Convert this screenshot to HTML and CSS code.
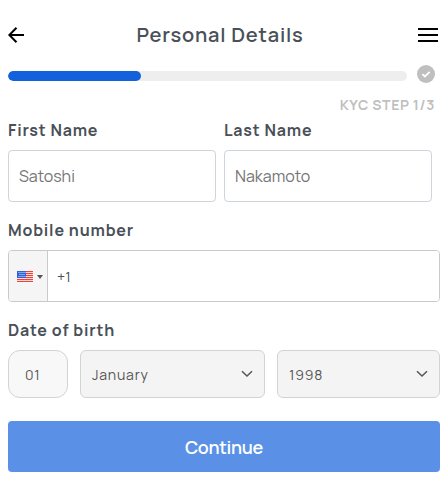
FILE: index.html
```html
<!DOCTYPE html>
<html lang="en">

<head>
  <meta charset="UTF-8">
  <meta name="viewport" content="width=device-width, initial-scale=1.0">
  <title>Personal Details</title>
  <link rel="stylesheet" href="styles.css">
</head>

<body>
  <div class="container">
    <div class="header">
      <button type="button" class="icon-btn" aria-label="Back">
        <svg width="16" height="16" viewBox="0 0 16 16" fill="none" stroke="#000" stroke-width="2">
          <path d="M16 8H1.5M8.5 0.7L1.3 8l7.2 7.3" />
        </svg>
      </button>
      <h1 class="title">Personal Details</h1>
      <button type="button" class="icon-btn" aria-label="Menu">
        <svg width="20" height="14" viewBox="0 0 20 14" fill="#000">
          <path d="M0 0h20v2H0zM0 6h20v2H0zM0 12h20v2H0z" />
        </svg>
      </button>
    </div>

    <div class="progress-row">
      <div class="progress">
        <div class="progress-bar"></div>
      </div>
      <svg class="check" width="18" height="18" viewBox="0 0 18 18">
        <circle cx="9" cy="9" r="9" fill="#bfbfbf" />
        <path d="M5.4 9.1l2.5 2.4 4.8-4.7" fill="none" stroke="#fff" stroke-width="1.8" />
      </svg>
    </div>
    <div class="step">KYC STEP 1/3</div>

    <form>
      <div class="name-row">
        <div class="field">
          <label class="label" for="firstName">First Name</label>
          <input type="text" id="firstName" class="input" placeholder="Satoshi">
        </div>
        <div class="field">
          <label class="label" for="lastName">Last Name</label>
          <input type="text" id="lastName" class="input" placeholder="Nakamoto">
        </div>
      </div>

      <label class="label" for="phone">Mobile number</label>
      <div class="phone">
        <button type="button" class="flag-btn" aria-label="Country">
          <svg width="16" height="11" viewBox="0 0 16 11">
            <rect width="16" height="11" fill="#f9dcd8" />
            <path d="M0 .5h16M0 2.5h16M0 4.5h16M0 6.5h16M0 8.5h16M0 10.5h16" stroke="#e8453c" />
            <rect x="0" y="0" width="9" height="7" fill="#2f62d9" />
            <path d="M1.5 1.5h7M2.5 3.5h6M1.5 5.5h7" stroke="#dce8ff" stroke-dasharray="1 1" />
          </svg>
          <span class="caret"></span>
        </button>
        <input type="tel" id="phone" class="phone-input" value="+1">
      </div>

      <label class="label" for="day">Date of birth</label>
      <div class="birth-row">
        <input type="text" id="day" class="day" value="01">
        <div class="select month">
          <span>January</span>
          <svg width="12" height="8" viewBox="0 0 12 8" fill="none" stroke="#555" stroke-width="1.5">
            <path d="M1 1.2l5 4.8 5-4.8" />
          </svg>
        </div>
        <div class="select year">
          <span>1998</span>
          <svg width="12" height="8" viewBox="0 0 12 8" fill="none" stroke="#555" stroke-width="1.5">
            <path d="M1 1.2l5 4.8 5-4.8" />
          </svg>
        </div>
      </div>

      <button type="submit" class="submit-btn">Continue</button>
    </form>
  </div>
</body>

</html>
```
FILE: styles.css
```css
* {
  box-sizing: border-box;
}

body {
  margin: 0;
  background-color: #fff;
  color: #495057;
  font-family: Manrope, Inter, sans-serif;
}

input,
button {
  font-family: inherit;
  margin: 0;
}

.container {
  padding: 20px 8px 0;
}

.header {
  display: flex;
  align-items: center;
  height: 30px;
  padding-right: 2px;
}

.icon-btn {
  display: flex;
  padding: 0;
  border: none;
  background: none;
  cursor: pointer;
}

.title {
  flex: 1;
  margin: 0;
  padding-right: 2px;
  font-size: 20px;
  font-weight: 600;
  line-height: 30px;
  letter-spacing: 0.8px;
  text-align: center;
}

.progress-row {
  display: flex;
  align-items: center;
  gap: 10px;
  height: 22px;
  margin-top: 15px;
}

.progress {
  width: 399px;
  height: 10px;
  border-radius: 5px;
  background-color: #eee;
  overflow: hidden;
}

.progress-bar {
  width: 133px;
  height: 10px;
  border-radius: 5px;
  background-color: #1461dc;
}

.check {
  margin-top: -4px;
}

.step {
  height: 33px;
  padding: 8px 5px 0 0;
  color: #bfbfbf;
  font-size: 14px;
  font-weight: 700;
  line-height: 20px;
  letter-spacing: 0.6px;
  text-align: right;
}

.label {
  display: block;
  height: 30px;
  font-size: 16px;
  font-weight: 700;
  line-height: 20px;
  letter-spacing: 0.8px;
}

.name-row {
  display: flex;
  gap: 8px;
  margin-bottom: 18px;
}

.field {
  width: 208px;
}

.input {
  display: block;
  width: 100%;
  height: 52px;
  padding: 0 10px;
  border: 1px solid #ced4da;
  border-radius: 4px;
  font-size: 16px;
}

.input::placeholder {
  color: #757575;
  opacity: 1;
}

.phone {
  display: flex;
  height: 52px;
  margin-bottom: 18px;
  border: 1px solid #cacaca;
  border-radius: 4px;
  overflow: hidden;
}

.flag-btn {
  display: flex;
  align-items: center;
  gap: 4px;
  width: 39px;
  padding: 1px 0 0 8px;
  border: none;
  border-right: 1px solid #cacaca;
  background-color: #f5f5f5;
}

.caret {
  border-left: 3px solid transparent;
  border-right: 3px solid transparent;
  border-top: 4px solid #555;
}

.phone-input {
  flex: 1;
  padding: 0 9px;
  border: none;
  color: #495057;
  font-size: 14px;
  letter-spacing: 0.3px;
}

.birth-row {
  display: flex;
  gap: 12px;
}

.day,
.select {
  height: 48px;
  border: 1px solid #d3d3d3;
  background-color: #f4f4f4;
  color: #555;
  font-size: 14px;
  letter-spacing: 0.8px;
}

.day {
  width: 60px;
  padding: 0 16px;
  border-radius: 12px;
  background-color: #f8f8f8;
}

.select {
  display: flex;
  align-items: center;
  justify-content: space-between;
  padding: 0 11px;
  border-radius: 6px;
}

.month {
  width: 185px;
}

.year {
  width: 163px;
}

.submit-btn {
  display: block;
  width: 100%;
  height: 51px;
  margin-top: 23px;
  border: none;
  border-radius: 4px;
  background-color: #5a91e6;
  color: #fff;
  font-size: 18px;
  font-weight: 600;
  letter-spacing: -0.3px;
  cursor: pointer;
}
```
